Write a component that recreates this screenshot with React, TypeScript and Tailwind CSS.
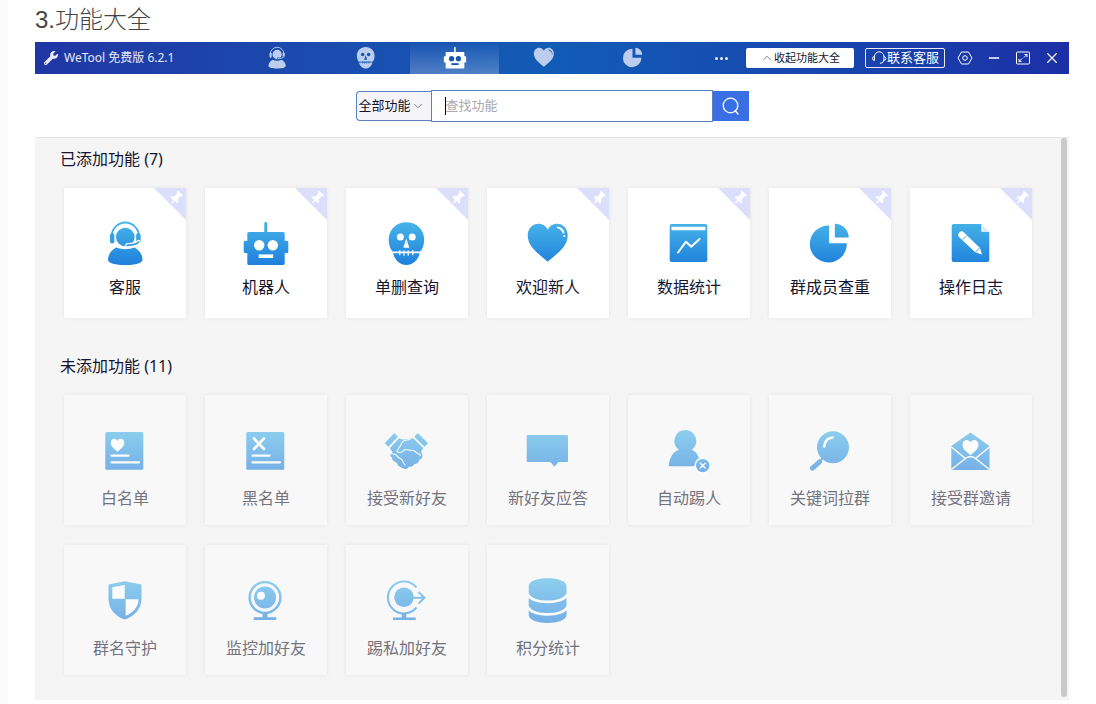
import { useState } from "react";
import type { ReactNode } from "react";
import { ChevronDown, ChevronUp, Minus, Search, X } from "lucide-react";
import { FaWrench } from "react-icons/fa";

type Paint = { fill: string; hole: string };

const HEART =
  "M23.7 41.7C18 36 3.7 28 3.7 15.5C3.7 8.5 8.5 3.7 14.5 3.7C18.5 3.7 22 6 23.7 9.7C25.4 6 29 3.7 33 3.7C39 3.7 43.7 8.5 43.7 15.5C43.7 28 29.4 36 23.7 41.7Z";

// every drawing sits in a 48x48 box
const ICONS: Record<string, (p: Paint) => ReactNode> = {
  service: ({ fill, hole }) => (
    <>
      <path d="M10.5 17a13.8 14.5 0 0 1 27.6 0" fill="none" stroke={fill} strokeWidth="1.8" />
      <circle cx="24.3" cy="17" r="9.3" fill={fill} />
      <rect x="9" y="13" width="4.4" height="10.5" rx="2.2" fill={fill} />
      <rect x="35.2" y="13" width="4.4" height="10.5" rx="2.2" fill={fill} />
      <path d="M37.5 22q-2 3-11.5 3.3" fill="none" stroke={hole} strokeWidth="4.2" strokeLinecap="round" />
      <path d="M37.5 22q-2 3-11.5 3.3" fill="none" stroke={fill} strokeWidth="1.8" strokeLinecap="round" />
      <path d="M15 27.5q9.3 3.5 18.6 0C38.5 30 41.5 35 41.5 39.5C41.5 43.5 34 45 24.3 45S7 43.5 7 39.5C7 35 10 30 15 27.5Z" fill={fill} />
    </>
  ),
  robot: ({ fill, hole }) => (
    <>
      <rect x="22.3" y="2" width="3" height="12" rx="1" fill={fill} />
      <rect x="5.3" y="12" width="37.4" height="33" rx="1.5" fill={fill} />
      <rect x="1.7" y="20.7" width="44.6" height="12.3" rx="1.5" fill={fill} />
      <circle cx="17.2" cy="25.3" r="5.2" fill={hole} />
      <circle cx="30.8" cy="25.3" r="5.2" fill={hole} />
      <rect x="16.7" y="34.4" width="14.5" height="3.6" fill={hole} />
    </>
  ),
  skull: ({ fill, hole }) => (
    <>
      <path d="M23.4 2.2C33.5 2.2 41.2 9.5 41.2 19.5C41.2 25 39.5 29 37 32C35.5 40 30 45 23.4 45S11.3 40 9.8 32C7.3 29 5.7 25 5.7 19.5C5.7 9.5 13.3 2.2 23.4 2.2Z" fill={fill} />
      <circle cx="17.4" cy="17" r="3.5" fill={hole} />
      <circle cx="29.2" cy="17" r="3.5" fill={hole} />
      <path d="M23.3 18.5l3 9.2h-6z" fill={hole} />
      <path d="M7 32.3h33" stroke={hole} strokeWidth="1.8" />
      <path d="M16.8 30v5.2M21 30.500v5.2M25.2 30.5v5.2M29.8 30v5.2" stroke={hole} strokeWidth="1.2" />
    </>
  ),
  heart: ({ fill, hole }) => (
    <>
      <path d={HEART} fill={fill} />
      <path d="M34 7.5q4 .8 5.5 5" fill="none" stroke={hole} strokeWidth="2" strokeLinecap="round" />
      <circle cx="40.3" cy="16" r="1.1" fill={hole} />
    </>
  ),
  stats: ({ fill, hole }) => (
    <>
      <rect x="4.7" y="4" width="37.6" height="38" rx="2" fill={fill} />
      <rect x="6.5" y="6.7" width="34" height="3.5" rx=".6" fill={hole} />
      <path d="M13 32.5l8-10.8 5.3 5L34.5 19" fill="none" stroke={hole} strokeWidth="2" strokeLinecap="round" strokeLinejoin="round" />
    </>
  ),
  pie: ({ fill }) => (
    <>
      <path d="M23 5.5V23.3H40.8A18.5 18.5 0 1 1 23 5.5Z" fill={fill} />
      <path d="M28.8 3.7A14 14 0 0 1 42.7 17.6H28.8Z" fill={fill} />
    </>
  ),
  log: ({ fill, hole }) => (
    <>
      <path d="M6.7 4H34.3L42.3 11.7V40a2 2 0 0 1-2 2H6.7a2 2 0 0 1-2-2V6a2 2 0 0 1 2-2Z" fill={fill} />
      <path d="M34.3 3.5V11.7H42.5Z" fill={hole} />
      <path d="M35.5 5.5V10.7H41Z" fill="#d3eafa" />
      <path d="M12.2 17.2a3.3 3.3 0 0 1 4.800-4.800L33 28l2 6.500-6.500-2Z" fill={hole} />
      <path d="M15.6 19.8l4.200-4.200M28.300 32.200l4.400-4.400" stroke={fill} strokeWidth=".9" />
    </>
  ),
  whitelist: ({ fill, hole }) => (
    <>
      <rect x="4.3" y="5" width="38" height="37.7" rx="1.5" fill={fill} />
      <path d={HEART} fill={hole} transform="translate(8.5 10.5) scale(.34)" />
      <path d="M10.5 28.7h17M10.5 35.3h27.5" stroke={hole} strokeWidth="2.2" strokeLinecap="round" />
    </>
  ),
  blacklist: ({ fill, hole }) => (
    <>
      <rect x="4.3" y="5" width="38" height="37.7" rx="1.5" fill={fill} />
      <path d="M12 11.5l10 10.5M22 11.5L12 22" stroke={hole} strokeWidth="2.6" strokeLinecap="round" />
      <path d="M10.5 28.7h17M10.5 35.3h27.5" stroke={hole} strokeWidth="2.2" strokeLinecap="round" />
    </>
  ),
  handshake: ({ fill, hole }) => (
    <>
      <path d="M11.3 6l3.6 3.7-9.5 10-3.7-3.4ZM34.7 6L45 16.3l-3.7 3.4-10-10Z" fill={fill} />
      <path d="M16 11.2C20 13 22 12.3 25 12L30.2 11.2L40.2 21L38 25C40 28 40.5 31 36.5 32.8C36 35.5 34 37 31.5 37C30 39.5 28 40 26 39.5C25 42 22 42.5 20 41.5L15 38.5L14 36L9.5 33L9 30.5C6.5 29 7 27 9.5 25.5L7 21Z" fill={fill} />
      <path d="M27.5 12.5C22 13 20 13.5 18.5 16.5C17.5 20 15 21 14 24.5C17 26.5 20 25 21.5 22.5L30.5 23.5L38 28.5M8 26.5L12.5 27.5L16 31L19 32.5L20.5 36L22.5 38.5" fill="none" stroke={hole} strokeWidth="1.1" strokeLinejoin="round" />
    </>
  ),
  reply: ({ fill }) => (
    <path d="M3.7 8H43a1 1 0 0 1 1 1V34a1 1 0 0 1-1 1H34.5L30.3 39.7L26.5 35H3.7a1 1 0 0 1-1-1V9a1 1 0 0 1 1-1Z" fill={fill} />
  ),
  kick: ({ fill, hole }) => (
    <>
      <path d="M20.3 3a11 11 0 0 1 6.5 19.8C32 25 35 30.5 35.5 39.3H3.7C4.5 30.5 8 25 13.8 22.8A11 11 0 0 1 20.3 3Z" fill={fill} />
      <circle cx="37.7" cy="38.6" r="8.3" fill={hole} />
      <circle cx="37.7" cy="38.6" r="6.7" fill={fill} />
      <path d="M35.3 36.2l4.8 4.8M40.1 36.2L35.3 41" stroke={hole} strokeWidth="1.5" strokeLinecap="round" />
    </>
  ),
  keyword: ({ fill, hole }) => (
    <>
      <circle cx="27" cy="20.3" r="16" fill={fill} />
      <path d="M18.2 19.5q.5-8 8.3-9" fill="none" stroke={hole} strokeWidth="2.6" strokeLinecap="round" />
      <path d="M17.5 30.5L13.5 34.5" stroke={fill} strokeWidth="2.2" />
      <path d="M13.5 35L6.5 41.2" stroke={fill} strokeWidth="5" strokeLinecap="round" />
    </>
  ),
  invite: ({ fill, hole }) => (
    <>
      <path d="M23.5 5.5L42.5 19V43H4.3V19Z" fill={fill} />
      <path d="M4.3 20L18.5 31.5M42.5 20L28.500 31.5M4.3 42.5L18.5 31.5Q23.5 27.500 28.5 31.5L42.5 42.5" fill="none" stroke={hole} strokeWidth="1.5" />
      <path d={HEART} fill={hole} transform="translate(14 11.5) scale(.4)" />
    </>
  ),
  shield: ({ fill, hole }) => (
    <>
      <path d="M23.7 4.3L40.5 7.5V22C40.5 32 33 39.5 23.7 42.5C14.5 39.5 7.5 32 7.5 22V7.5Z" fill={fill} />
      <path d="M11.3 10.3L23.7 8V21.7H11.3Z" fill={hole} />
      <path d="M24.7 22.3H37.5C37.5 30 32 36 24.7 38.7Z" fill={hole} />
    </>
  ),
  webcam: ({ fill, hole }) => (
    <>
      <circle cx="23" cy="20.5" r="15.4" fill="none" stroke={fill} strokeWidth="2.4" />
      <circle cx="23" cy="20.5" r="11" fill={fill} />
      <circle cx="18.9" cy="18.7" r="4" fill={hole} />
      <path d="M20.5 36h5v4.3H34.2V43H11.7V40.3h8.8Z" fill={fill} />
    </>
  ),
  kickPrivate: ({ fill }) => (
    <>
      <path d="M33.5 10.5A16 16 0 1 0 33.5 30.3" fill="none" stroke={fill} strokeWidth="2" />
      <circle cx="21" cy="20.3" r="9.8" fill={fill} />
      <path d="M29 20.8H40.5M35.5 15l6 5.8-6 5.8" fill="none" stroke={fill} strokeWidth="2" />
      <path d="M18.7 36h4.6v4.5h9.5V43H10V40.5h8.7Z" fill={fill} />
    </>
  ),
  points: ({ fill, hole }) => (
    <>
      <path d="M4.7 9C4.7 -1.5 42.5 -1.5 42.5 9V38C42.5 48.5 4.7 48.5 4.7 38Z" fill={fill} />
      <path d="M3.7 17C7 27.5 40 27.5 43.5 17M3.7 29.5C7 40 40 40 43.5 29.5" fill="none" stroke={hole} strokeWidth="2.6" />
    </>
  ),
};

const ADDED = [
  { icon: "service", name: "客服" },
  { icon: "robot", name: "机器人" },
  { icon: "skull", name: "单删查询" },
  { icon: "heart", name: "欢迎新人" },
  { icon: "stats", name: "数据统计" },
  { icon: "pie", name: "群成员查重" },
  { icon: "log", name: "操作日志" },
];

const NOT_ADDED = [
  { icon: "whitelist", name: "白名单" },
  { icon: "blacklist", name: "黑名单" },
  { icon: "handshake", name: "接受新好友" },
  { icon: "reply", name: "新好友应答" },
  { icon: "kick", name: "自动踢人" },
  { icon: "keyword", name: "关键词拉群" },
  { icon: "invite", name: "接受群邀请" },
  { icon: "shield", name: "群名守护" },
  { icon: "webcam", name: "监控加好友" },
  { icon: "kickPrivate", name: "踢私加好友" },
  { icon: "points", name: "积分统计" },
];

const TABS = [
  { icon: "service", name: "客服" },
  { icon: "skull", name: "单删查询" },
  { icon: "robot", name: "机器人" },
  { icon: "heart", name: "欢迎新人" },
  { icon: "pie", name: "群成员查重" },
];

function Icon({ name, fill, hole, className }: { name: string; className: string } & Paint) {
  return (
    <svg viewBox="0 0 48 48" className={className} aria-hidden="true">
      {ICONS[name]({ fill, hole })}
    </svg>
  );
}

function TitleBar() {
  const [tab, setTab] = useState("robot");

  return (
    <header className="flex h-8 items-stretch bg-linear-to-r from-[#2036a4] via-[#125cb6] to-[#1c2fa6] text-white">
      <div className="flex w-[197px] shrink-0 items-center gap-1.5 pl-[9px] text-xs">
        <FaWrench className="size-3.5 text-white/90" />
        <span className="whitespace-nowrap text-white/90">WeTool 免费版 6.2.1</span>
      </div>
      <nav className="flex min-w-0 flex-1">
        {TABS.map((t) => (
          <button
            key={t.icon}
            aria-label={t.name}
            onClick={() => setTab(t.icon)}
            className={`grid w-[89px] place-items-center ${
              tab === t.icon ? "bg-linear-to-b from-white/0 to-white/25" : ""
            }`}
          >
            <Icon
              name={t.icon}
              fill={tab === t.icon ? "#ffffff" : "#bccdee"}
              hole="#1756b3"
              className="size-6"
            />
          </button>
        ))}
        <button aria-label="更多" className="flex flex-1 items-center justify-center gap-0.5 pl-5">
          <span className="size-[3px] rounded-full bg-white/90" />
          <span className="size-[3px] rounded-full bg-white/90" />
          <span className="size-[3px] rounded-full bg-white/90" />
        </button>
      </nav>
      <div className="flex shrink-0 items-center pr-[3px]">
        <button className="flex h-5 w-[108px] items-center justify-center rounded-xs bg-white text-[11px] text-[#15152f]">
          <ChevronUp className="size-3.5 text-gray-500" strokeWidth={1.5} />
          收起功能大全
        </button>
        <button className="mr-[5px] ml-[11px] flex h-5 w-20 items-center justify-center rounded-xs border border-white/90 text-[13px]">
          <svg viewBox="0 0 16 16" className="size-4" fill="none" stroke="currentColor" aria-hidden="true">
            <path d="M3.500 10.500V6.500a4.700 4.700 0 0 1 9.400 0V10q0 3-4 3.500" />
            <path d="M3.500 6.500Q1.500 6.700 1.500 8.500t2 2M12.900 6.500q2 .2 2 2t-2 2" />
          </svg>
          联系客服
        </button>
        <button aria-label="设置" className="grid w-[29px] place-items-center">
          <svg viewBox="0 0 16 16" className="size-4" fill="none" stroke="currentColor">
            <path d="M4.500 2h7L15 8l-3.500 6h-7L1 8Z" strokeLinejoin="round" />
            <circle cx="8" cy="8" r="2.300" />
          </svg>
        </button>
        <button aria-label="最小化" className="grid w-[29px] place-items-center">
          <Minus className="size-4" strokeWidth={2} />
        </button>
        <button aria-label="最大化" className="grid w-[29px] place-items-center">
          <svg viewBox="0 0 16 16" className="size-4" fill="none" stroke="currentColor">
            <rect x="1.500" y="2" width="13" height="12" rx="1" />
            <path d="M9.500 4.500H12V7M12 4.500L9 7.500M6.500 11.500H4V9M4 11.500L7 8.500" />
          </svg>
        </button>
        <button aria-label="关闭" className="grid w-[29px] place-items-center">
          <X className="size-[18px]" strokeWidth={1.5} />
        </button>
      </div>
    </header>
  );
}

function SearchBar() {
  return (
    <form className="flex items-center justify-center pt-4 pb-[15px]" onSubmit={(e) => e.preventDefault()}>
      <div className="relative">
        <select
          aria-label="功能范围"
          className="block h-[30px] w-[75px] appearance-none rounded-l border border-r-0 border-[#5b80c8] bg-[#f5f5f7] pl-0.5 text-[13px] text-[#15152f]"
        >
          <option>全部功能</option>
        </select>
        <ChevronDown className="pointer-events-none absolute top-2 right-1.5 size-3.5 text-gray-500" strokeWidth={1.5} />
      </div>
      <div className="flex h-8 w-[282px] items-center border border-[#5b80c8] bg-white pl-[13px]">
        <span className="h-[18px] w-px bg-black" />
        <input
          aria-label="查找功能"
          placeholder="查找功能"
          className="min-w-0 flex-1 text-[13px] outline-none placeholder:text-[#a9a9a9]"
        />
      </div>
      <button aria-label="搜索" className="grid h-[30px] w-9 place-items-center bg-[#3a6fe4] text-white">
        <svg viewBox="0 0 18 18" className="size-[18px]" fill="none" stroke="currentColor" strokeWidth="1.3" aria-hidden="true">
          <circle cx="8.500" cy="8.500" r="7.300" />
          <path d="M13 13.500L16 17" strokeLinecap="round" />
        </svg>
      </button>
    </form>
  );
}

function Card({ icon, name, added }: { icon: string; name: string; added?: boolean }) {
  return (
    <button
      className={`relative flex flex-col items-center pt-8 shadow-[0_0_4px_rgba(0,0,0,0.07)] ${
        added ? "bg-white pb-[19px]" : "bg-[#f8f8f8] pb-[15px]"
      }`}
    >
      {added && (
        <svg viewBox="0 0 32 32" className="absolute top-0 right-0 size-8" aria-hidden="true">
          <path d="M0 0H32V32Z" fill="#dcdffb" />
          <path
            d="M-3.5 -6h7v1.5l-1.3 1V.5C4 1.5 4.7 2.5 4.7 4H.7V7.5H-.7V4H-4.7C-4.7 2.5 -4 1.5 -2.2 .5V-3.5l-1.3 -1Z"
            fill="#fff"
            transform="translate(22.5 9.5) rotate(42)"
          />
        </svg>
      )}
      <Icon
        name={icon}
        fill="url(#blue)"
        hole="#ffffff"
        className={added ? "size-12" : "size-12 opacity-60"}
      />
      <span
        className={`text-base leading-6 whitespace-nowrap ${
          added ? "mt-[7px] text-[#15152f]" : "mt-[11px] text-[#73737f]"
        }`}
      >
        {name}
      </span>
    </button>
  );
}

export default function App() {
  return (
    <main className="min-h-screen border-l-8 border-[#fbfbfb] bg-white pt-1.5 pr-[27px] pb-1 pl-[27px] font-['Noto_Sans','Noto_Sans_CJK_SC',sans-serif]">
      <svg className="absolute size-0" aria-hidden="true">
        <defs>
          <linearGradient id="blue" gradientUnits="userSpaceOnUse" x1="0" y1="2" x2="0" y2="45">
            <stop offset="0" stopColor="#46b4e8" />
            <stop offset="1" stopColor="#1f80dc" />
          </linearGradient>
        </defs>
      </svg>

      <h1 className="mb-2 font-['Liberation_Sans','Noto_Sans_CJK_SC',sans-serif] text-2xl leading-7 font-light text-[#444]">
        3.功能大全
      </h1>

      <TitleBar />
      <SearchBar />

      <div className="flex border-t border-[#e6e6e6] bg-[#f5f5f5]">
        <div className="min-w-0 flex-1 px-[29px] pt-[9px] pb-[25px]">
          <h2 className="mb-[17px] -ml-1 text-base leading-6 text-[#15152f]">已添加功能 (7)</h2>
          <div className="grid grid-cols-7 gap-x-[19px] gap-y-5">
            {ADDED.map((f) => (
              <Card key={f.name} {...f} added />
            ))}
          </div>

          <h2 className="mt-9 mb-[17px] -ml-1 text-base leading-6 text-[#15152f]">未添加功能 (11)</h2>
          <div className="grid grid-cols-7 gap-x-[19px] gap-y-5">
            {NOT_ADDED.map((f) => (
              <Card key={f.name} {...f} />
            ))}
          </div>
        </div>
        <div className="mr-0.5 mb-[3px] w-1.5 rounded-full bg-[#c9c9c9]" />
      </div>
    </main>
  );
}
